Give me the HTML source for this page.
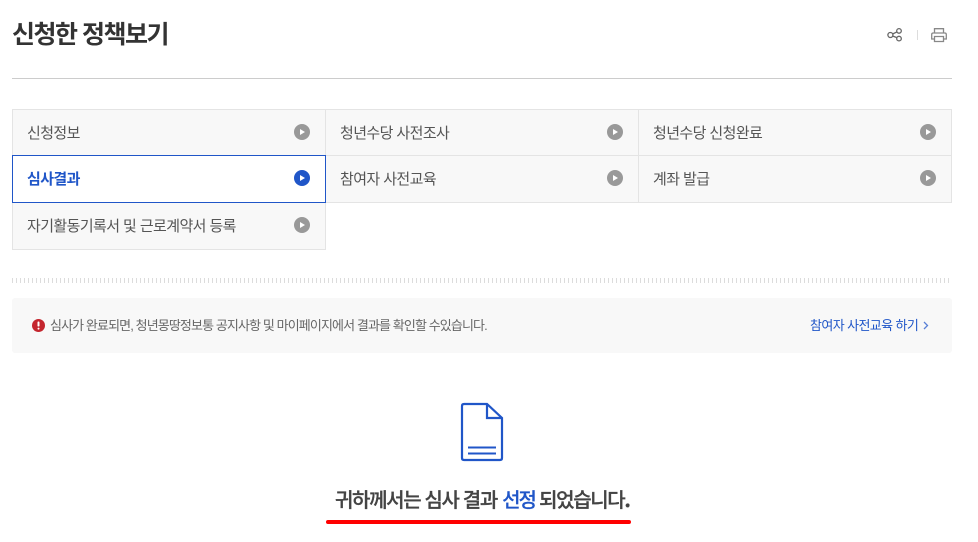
<!DOCTYPE html>
<html lang="ko"><head><meta charset="utf-8"><style>
html,body{margin:0;padding:0;background:#fff}
body{position:relative;width:978px;height:542px;overflow:hidden;font-family:"Liberation Sans","Noto Sans CJK KR",sans-serif;color:#444}
.a{position:absolute;white-space:nowrap}
.cell{position:absolute;box-sizing:border-box;background:#f8f8f8;border:1px solid #e4e4e4;height:48px}
.t{position:absolute;left:14px;top:0;line-height:46px;padding-top:1px;font-size:15px;letter-spacing:-.59px;color:#555;white-space:nowrap}
.ic{position:absolute;right:15px;top:14px;width:16px;height:16px;border-radius:50%;background:#999}
.ic:after{content:"";position:absolute;left:6px;top:5px;border-left:5px solid #fff;border-top:3px solid transparent;border-bottom:3px solid transparent}
.on{background:#fff;border-color:#2056c8;z-index:2}
.on .t{color:#2056c8;font-weight:700}
.on .ic{background:#2056c8}
</style></head><body>
<div class="a" style="left:12px;top:15px;font-size:25px;line-height:40px;font-weight:700;letter-spacing:-1.5px;color:#333">신청한 정책보기</div>
<svg class="a" style="left:886px;top:27px" width="18" height="16" viewBox="0 0 18 16" fill="none" stroke="#666" stroke-width="1.300"><circle cx="4.400" cy="8" r="2.500"/><circle cx="13" cy="3.900" r="2.300"/><circle cx="13" cy="11.600" r="2.300"/><path d="M6.600 7 10.900 4.900M6.600 9 10.900 10.600"/></svg>
<div class="a" style="left:917px;top:30px;width:1px;height:10px;background:#ddd"></div>
<svg class="a" style="left:931px;top:27px" width="16" height="16" viewBox="0 0 16 16" fill="none" stroke="#888" stroke-width="1.300"><path d="M3.500 12H.7V7.500Q.7 6 2.200 6H13.800Q15.300 6 15.300 7.500V12H12.500"/><path d="M3.500 6V1.700H12.500V6M3.500 9.500H12.500V14.500H3.500Z"/></svg>
<div class="a" style="left:12px;top:78px;width:940px;height:1px;background:#ccc"></div>

<div class="cell" style="left:12px;top:109px;width:314px;height:47px"><div class="t">신청정보</div><div class="ic"></div></div>
<div class="cell" style="left:325px;top:109px;width:314px;height:47px"><div class="t">청년수당 사전조사</div><div class="ic"></div></div>
<div class="cell" style="left:638px;top:109px;width:314px;height:47px"><div class="t">청년수당 신청완료</div><div class="ic"></div></div>
<div class="cell on" style="left:12px;top:155px;width:314px"><div class="t">심사결과</div><div class="ic"></div></div>
<div class="cell" style="left:325px;top:155px;width:314px"><div class="t">참여자 사전교육</div><div class="ic"></div></div>
<div class="cell" style="left:638px;top:155px;width:314px"><div class="t">계좌 발급</div><div class="ic"></div></div>
<div class="cell" style="left:12px;top:202px;width:314px"><div class="t">자기활동기록서 및 근로계약서 등록</div><div class="ic"></div></div>

<div class="a" style="left:12px;top:278px;width:940px;height:5px;background:repeating-linear-gradient(90deg,#dcdcdc 0 1px,transparent 1px 4px)"></div>

<div class="a" style="left:12px;top:298px;width:940px;height:55px;background:#f8f8f8;border-radius:3px"></div>
<svg class="a" style="left:32px;top:319px" width="13" height="13" viewBox="0 0 13 13"><circle cx="6.500" cy="6.500" r="6.500" fill="#c4262e"/><rect x="5.500" y="2.500" width="2" height="5" rx=".8" fill="#fff"/><rect x="5.500" y="8.600" width="2" height="2" rx="1" fill="#fff"/></svg>
<div class="a" style="left:50px;top:316px;font-size:13px;line-height:20px;letter-spacing:-.89px;color:#666">심사가 완료되면, 청년몽땅정보통 공지사항 및 마이페이지에서 결과를 확인할 수있습니다.</div>
<div class="a" style="left:810px;top:316px;font-size:13px;line-height:20px;letter-spacing:-.6px;color:#2056c8">참여자 사전교육 하기</div>
<svg class="a" style="left:923px;top:321px" width="6" height="9" viewBox="0 0 6 9" fill="none" stroke="#5a80d6" stroke-width="1.300"><path d="M1 1 4.500 4.500 1 8"/></svg>

<svg class="a" style="left:460px;top:402px" width="44" height="60" viewBox="0 0 44 60" fill="none" stroke="#2056c8" stroke-width="2.200"><path d="M27 2H4Q2 2 2 4V56Q2 58 4 58H40Q42 58 42 56V16L27 2ZM27 2V16H42"/><path d="M8 45.500H36M8 51.500H36" stroke-width="2"/></svg>

<div class="a" style="left:335px;top:484px;font-size:20px;line-height:30px;font-weight:500;letter-spacing:-1.35px;color:#444;-webkit-text-stroke:.3px #444">귀하께서는 심사 결과 <span style="color:#2056c8;margin-left:1px;letter-spacing:-2px;-webkit-text-stroke:.2px #2056c8">선정</span> 되었습니다<span style="font-family:'Noto Sans CJK KR',sans-serif;font-weight:700">.</span></div>
<div class="a" style="left:326px;top:520px;width:305px;height:4px;background:#f00;border-radius:2px"></div>
</body></html>
